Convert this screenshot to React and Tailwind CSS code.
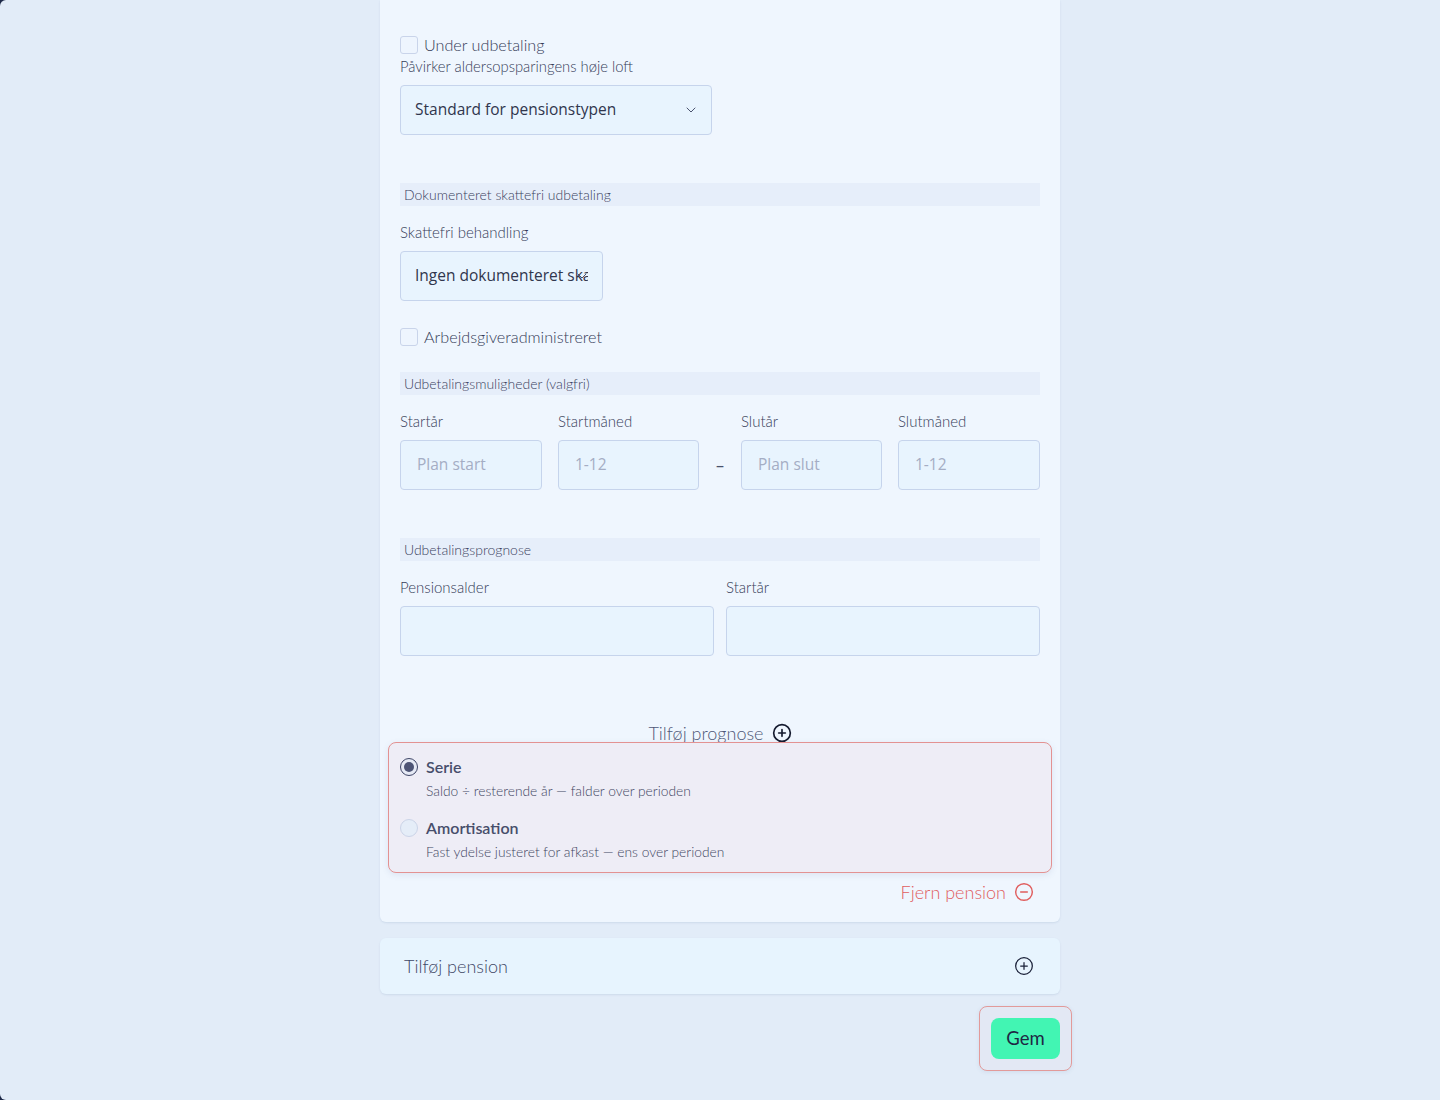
import React, { useState } from 'react';
import { CirclePlus, CircleMinus, ChevronDown } from 'lucide-react';

const label = "font-['Lato',sans-serif] text-[15px] leading-5 font-light text-[#353c58]";
const field = "h-[50px] rounded border border-[#c6d4ec] bg-[#e8f4fe] font-['Open_Sans',sans-serif] text-[15.5px] text-[#30364d]";

function Checkbox({ text }) {
  return (
    <label className="flex items-center gap-[6px]">
      <span className="h-[18px] w-[18px] rounded-[3px] border border-[#c9d4ea] bg-[#eef5fe]" />
      <span className="font-['Lato',sans-serif] text-[16.2px] font-light leading-[18px] text-[#353c58]">{text}</span>
    </label>
  );
}

function SectionBar({ children }) {
  return (
    <div className="flex h-[23px] items-center bg-[#e6eefa] px-1 font-['Lato',sans-serif] text-[14px] font-light text-[#3b4260]">
      {children}
    </div>
  );
}

function Select({ value, width }) {
  return (
    <div className={`relative flex items-center pl-[14px] pr-[14px] ${field} ${width}`}>
      <span className="block min-w-0 flex-1 overflow-hidden whitespace-nowrap">{value}</span>
      <ChevronDown className="absolute right-[12px] top-[16px] h-4 w-4 text-[#4b536e]" strokeWidth={1.5} />
    </div>
  );
}

function Input({ placeholder, className = '' }) {
  return (
    <div className={`flex items-center px-4 ${field} ${className}`}>
      <span className="text-[#a4adc4]">{placeholder}</span>
    </div>
  );
}

function Radio({ checked }) {
  return checked ? (
    <span className="flex h-[18px] w-[18px] items-center justify-center rounded-full border border-[#3e4566] bg-[#e6eaf5]">
      <span className="h-[10px] w-[10px] rounded-full bg-[#4d5475]" />
    </span>
  ) : (
    <span className="h-[18px] w-[18px] rounded-full border border-[#cbd4e8] bg-[#e5edf8]" />
  );
}

export default function App() {
  const [method] = useState('serie');

  const methods = [
    { id: 'serie', title: 'Serie', desc: 'Saldo ÷ resterende år — falder over perioden' },
    { id: 'amort', title: 'Amortisation', desc: 'Fast ydelse justeret for afkast — ens over perioden' },
  ];

  return (
    <div className="min-h-screen bg-[#1d2948]">
      <main className="h-[1100px] overflow-hidden rounded-l-[6px] bg-[#e2ecf8]">
        <div className="mx-auto flex w-[680px] flex-col">
          {/* pension card */}
          <section className="flex flex-col rounded-b-md bg-[#eff6fe] px-5 pb-[18px] pt-[36px] shadow-[0_1px_2px_rgba(90,120,170,0.15)]">
            <Checkbox text="Under udbetaling" />
            <p className="mt-[2px] font-['Lato',sans-serif] text-[14.8px] font-light leading-5 text-[#353c58]">
              Påvirker aldersopsparingens høje loft
            </p>
            <div className="mt-[9px]">
              <Select value="Standard for pensionstypen" width="w-[312px]" />
            </div>

            <div className="mt-[48px]">
              <SectionBar>Dokumenteret skattefri udbetaling</SectionBar>
            </div>
            <p className={`mt-[16px] ${label}`}>Skattefri behandling</p>
            <div className="mt-[9px]">
              <Select value="Ingen dokumenteret skattefri udbetaling" width="w-[203px]" />
            </div>
            <div className="mt-[27px]">
              <Checkbox text="Arbejdsgiveradministreret" />
            </div>

            <div className="mt-[26px]">
              <SectionBar>Udbetalingsmuligheder (valgfri)</SectionBar>
            </div>
            <div className="mt-[16px] grid grid-cols-[142px_16px_141px_42px_141px_16px_142px]">
              <p className={label}>Startår</p>
              <span />
              <p className={label}>Startmåned</p>
              <span />
              <p className={label}>Slutår</p>
              <span />
              <p className={label}>Slutmåned</p>
              <Input placeholder="Plan start" className="mt-[9px]" />
              <span />
              <Input placeholder="1-12" className="mt-[9px]" />
              <span className="mt-[9px] flex items-center justify-center text-[#4a516b]">–</span>
              <Input placeholder="Plan slut" className="mt-[9px]" />
              <span />
              <Input placeholder="1-12" className="mt-[9px]" />
            </div>

            <div className="mt-[48px]">
              <SectionBar>Udbetalingsprognose</SectionBar>
            </div>
            <div className="mt-[16px] grid grid-cols-2 gap-x-3">
              <p className={label}>Pensionsalder</p>
              <p className={label}>Startår</p>
              <div className={`mt-[9px] ${field}`} />
              <div className={`mt-[9px] ${field}`} />
            </div>

            <button className="mt-[65px] flex h-6 items-center justify-center gap-2 self-center font-['Lato',sans-serif] text-[18px] font-light text-[#4f5878]">
              Tilføj prognose
              <CirclePlus className="h-5 w-5 text-[#141a2e]" strokeWidth={2} />
            </button>

            {/* payout method */}
            <div className="-mx-3 -mt-[3px] flex flex-col rounded-lg border border-[#e39292] bg-[#eeedf6] pb-[10px] pl-[11px] pt-[15px] shadow-[0_2px_6px_rgba(90,110,160,0.12)]">
              {methods.map((m, i) => (
                <div key={m.id} className={i > 0 ? 'mt-[18px]' : ''}>
                  <div className="flex h-[18px] items-center gap-2">
                    <Radio checked={method === m.id} />
                    <span className="font-['Lato',sans-serif] text-[16px] font-semibold text-[#474e6b]">{m.title}</span>
                  </div>
                  <p className="mt-[5px] pl-[26px] font-['Lato',sans-serif] text-[13.8px] font-light leading-5 text-[#3f4662]">{m.desc}</p>
                </div>
              ))}
            </div>

            <button className="mt-[7px] flex h-6 items-center gap-2 self-end pr-[6px] font-['Lato',sans-serif] text-[18px] font-light text-[#e05e5e]">
              Fjern pension
              <CircleMinus className="h-5 w-5" strokeWidth={1.75} />
            </button>
          </section>

          {/* add pension */}
          <section className="mt-4 flex h-[56px] items-center justify-between rounded-md bg-[#e7f4fe] pl-6 pr-[26px] shadow-[0_1px_2px_rgba(90,120,170,0.15)]">
            <span className="font-['Lato',sans-serif] text-[18px] font-light text-[#3f4766]">Tilføj pension</span>
            <CirclePlus className="h-5 w-5 text-[#1a2038]" strokeWidth={1.5} />
          </section>

          <div className="-mr-3 mt-3 self-end rounded-lg border border-[#e29a9a] bg-[#e3e8f4] p-[11px] shadow-[0_1px_4px_rgba(90,110,160,0.12)]">
            <button className="flex h-[41px] w-[69px] items-center justify-center rounded-lg bg-[#42f5b3] font-['Lato',sans-serif] text-[18.5px] text-[#1f2744]">
              Gem
            </button>
          </div>
        </div>
      </main>
    </div>
  );
}
